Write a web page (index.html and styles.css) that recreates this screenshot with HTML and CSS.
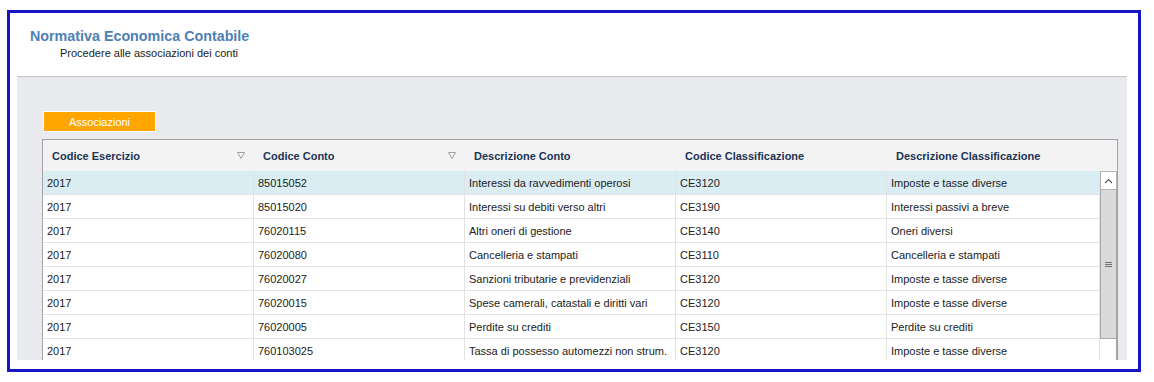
FILE: index.html
```html
<!DOCTYPE html>
<html lang="it">
<head>
  <meta charset="UTF-8" />
  <title>Normativa Economica Contabile</title>
  <link rel="stylesheet" href="styles.css">
</head>
<body>
  <div class="frame">
    <div class="page-head">
      <h1>Normativa Economica Contabile</h1>
      <p>Procedere alle associazioni dei conti</p>
    </div>

    <div class="panel">
      <button type="button" class="btn-assoc">Associazioni</button>

      <div class="grid">
        <div class="grid-head">
          <div class="hcell">Codice Esercizio <svg class="filter" width="8" height="7" viewBox="0 0 8 7"><path d="M0.5 0.5 H7.5 L4 6.5 Z" fill="none" stroke="#a0a0a0" stroke-width="1"/></svg></div>
          <div class="hcell">Codice Conto <svg class="filter" width="8" height="7" viewBox="0 0 8 7"><path d="M0.5 0.5 H7.5 L4 6.5 Z" fill="none" stroke="#a0a0a0" stroke-width="1"/></svg></div>
          <div class="hcell">Descrizione Conto</div>
          <div class="hcell">Codice Classificazione</div>
          <div class="hcell">Descrizione Classificazione</div>
        </div>

        <div class="grid-body">
          <div class="rows">
            <div class="row selected">
              <div class="cell">2017</div><div class="cell">85015052</div><div class="cell">Interessi da ravvedimenti operosi</div><div class="cell">CE3120</div><div class="cell">Imposte e tasse diverse</div>
            </div>
            <div class="row">
              <div class="cell">2017</div><div class="cell">85015020</div><div class="cell">Interessi su debiti verso altri</div><div class="cell">CE3190</div><div class="cell">Interessi passivi a breve</div>
            </div>
            <div class="row">
              <div class="cell">2017</div><div class="cell">76020115</div><div class="cell">Altri oneri di gestione</div><div class="cell">CE3140</div><div class="cell">Oneri diversi</div>
            </div>
            <div class="row">
              <div class="cell">2017</div><div class="cell">76020080</div><div class="cell">Cancelleria e stampati</div><div class="cell">CE3110</div><div class="cell">Cancelleria e stampati</div>
            </div>
            <div class="row">
              <div class="cell">2017</div><div class="cell">76020027</div><div class="cell">Sanzioni tributarie e previdenziali</div><div class="cell">CE3120</div><div class="cell">Imposte e tasse diverse</div>
            </div>
            <div class="row">
              <div class="cell">2017</div><div class="cell">76020015</div><div class="cell">Spese camerali, catastali e diritti vari</div><div class="cell">CE3120</div><div class="cell">Imposte e tasse diverse</div>
            </div>
            <div class="row">
              <div class="cell">2017</div><div class="cell">76020005</div><div class="cell">Perdite su crediti</div><div class="cell">CE3150</div><div class="cell">Perdite su crediti</div>
            </div>
            <div class="row">
              <div class="cell">2017</div><div class="cell">760103025</div><div class="cell">Tassa di possesso automezzi non strum.</div><div class="cell">CE3120</div><div class="cell">Imposte e tasse diverse</div>
            </div>
          </div>

          <div class="vscroll">
            <div class="scroll-up"><svg width="9" height="6" viewBox="0 0 9 6"><path d="M1 5 L4.5 1.5 L8 5" fill="none" stroke="#606060" stroke-width="1.2"/></svg></div>
            <div class="scroll-thumb"><span class="grip"></span></div>
            <div class="scroll-track"></div>
          </div>
        </div>
      </div>
    </div>
  </div>
</body>
</html>
```

FILE: styles.css
```css
body {
  margin: 0;
  padding: 0;
  background: #ffffff;
  font-family: "Liberation Sans", Arial, sans-serif;
  font-size: 11px;
  color: #222222;
}
.frame {
  margin: 10px 0 0 7px;
  width: 1128px;
  height: 356px;
  border: 3px solid #1414c8;
  background: #ffffff;
  overflow: hidden;
}
.page-head {
  padding: 15px 0 0 20px;
  height: 48px;
}
.page-head h1 {
  margin: 0;
  font-size: 14.3px;
  line-height: 17px;
  font-weight: bold;
  color: #4f7fb5;
}
.page-head p {
  margin: 1px 0 0 30px;
  font-size: 11px;
  line-height: 14px;
  color: #1a1a1a;
}
.panel {
  margin-left: 7px;
  width: 1110px;
  height: 284px;
  border-top: 1px solid #c6c6ca;
  background: #e9eaee;
  padding: 34px 0 0 25px;
  box-sizing: border-box;
  overflow: hidden;
}
.btn-assoc {
  display: block;
  margin-left: 1px;
  width: 113px;
  height: 21px;
  border: 1px solid #ffffff;
  background: #ffa500;
  color: #ffffff;
  font-family: "Liberation Sans", Arial, sans-serif;
  font-size: 11px;
  padding: 0;
}
.grid {
  margin-top: 7px;
  width: 1074px;
  border: 1px solid #a4a4a4;
  border-bottom: none;
  background: #ffffff;
}
.grid-head {
  display: grid;
  grid-template-columns: 211px 211px 211px 211px 1fr;
  height: 31px;
  background: #f3f3f3;
}
.hcell {
  display: flex;
  align-items: center;
  padding: 0 9px;
  font-weight: bold;
  color: #1c3455;
}
.filter {
  margin-left: auto;
}
.grid-body {
  display: flex;
}
.rows {
  flex: 1;
}
.row {
  display: grid;
  grid-template-columns: 211px 211px 211px 211px 1fr;
  height: 24px;
}
.row.selected {
  background: #daedf3;
}
.cell {
  display: flex;
  align-items: center;
  padding-left: 4px;
  border-right: 1px solid #e2e2e2;
  border-bottom: 1px solid #e2e2e2;
  color: #222222;
  white-space: nowrap;
  overflow: hidden;
}
.row .cell:last-child {
  border-right: none;
}
.vscroll {
  width: 17px;
  display: flex;
  flex-direction: column;
  border-left: 1px solid #e2e2e2;
  background: #f4f4f4;
}
.scroll-up {
  height: 17px;
  border: 1px solid #b4b4b4;
  background: #ffffff;
  display: flex;
  align-items: center;
  justify-content: center;
}
.scroll-thumb {
  height: 148px;
  border: 1px solid #a8a8a8;
  border-top: none;
  background: #dadada;
  display: flex;
  align-items: center;
  justify-content: center;
}
.grip {
  width: 7px;
  height: 5px;
  border-top: 1px solid #707070;
  border-bottom: 1px solid #707070;
  box-sizing: border-box;
  background: linear-gradient(#707070, #707070) center / 100% 1px no-repeat;
}
.scroll-track {
  flex: 1;
  border-right: 1px solid #a8a8a8;
  background: #ffffff;
  height: 40px;
}
```
